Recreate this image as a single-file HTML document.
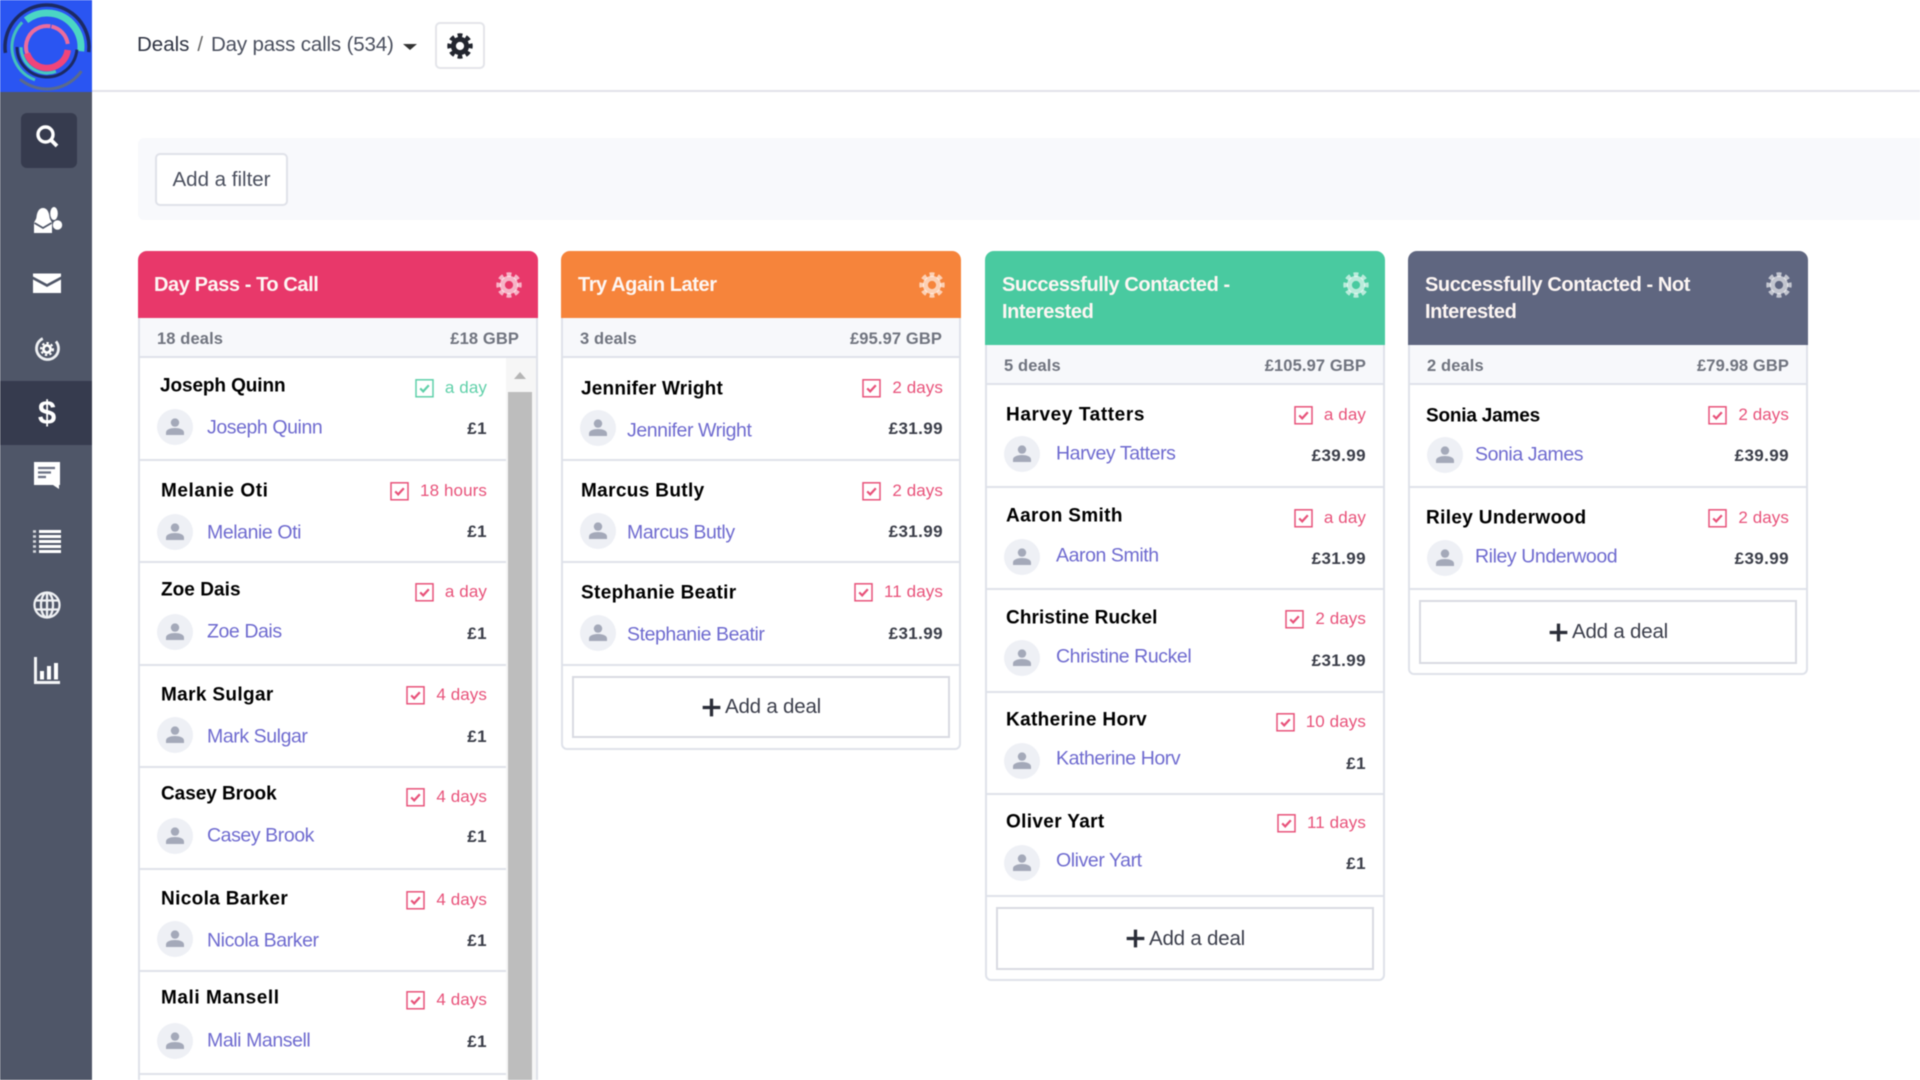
<!DOCTYPE html>
<html lang="en"><head><meta charset="utf-8"><title>Deals</title>
<style>
*{box-sizing:border-box}
html,body{margin:0;padding:0;width:1920px;height:1080px;overflow:hidden;background:#fff;font-family:"Liberation Sans",sans-serif}
#w{position:absolute;left:0;top:0;width:1920px;height:1080px;overflow:hidden;filter:blur(.45px)}
.abs{position:absolute}
#side{position:absolute;left:0;top:0;width:92px;height:1080px;background:#4f5668}
#logo{position:absolute;left:0;top:0;width:92px;height:92px;background:#2a55f2;overflow:hidden}
#sb{position:absolute;left:21px;top:113px;width:56px;height:55px;background:#363b4e;border-radius:6px}
#act{position:absolute;left:0;top:381px;width:92px;height:64px;background:#363b4e}
.si{position:absolute;left:29px;width:36px;height:36px;color:#fff}
#top{position:absolute;left:92px;top:90px;width:1828px;height:2px;background:#e2e2ea}
#crumb{position:absolute;left:137px;top:31px;font-size:20.5px;line-height:27px;color:#4a4f5e;white-space:nowrap;letter-spacing:-.15px}
#crumb b{font-weight:normal;color:#2e3342;letter-spacing:0}
#crumb i{font-style:normal;color:#666;margin:0 8px}
#caret{position:absolute;left:403px;top:44px;width:0;height:0;border:7px solid transparent;border-top:6px solid #333;border-bottom:0}
#gbtn{position:absolute;left:435px;top:22px;width:50px;height:47px;border:2px solid #e4e5ea;border-radius:5px;background:#fff}
#fbar{position:absolute;left:138px;top:138px;width:1782px;height:82px;background:#f8f9fc;border-radius:6px 0 0 6px}
#fbtn{position:absolute;left:155px;top:153px;width:133px;height:53px;background:#fff;border:2px solid #e0e2e9;border-radius:5px;font-size:20.5px;line-height:49px;text-align:center;color:#4a4f5e}
.col{position:absolute;top:0;width:400px;height:1080px}
.hd{position:absolute;left:0;top:251px;width:400px;border-radius:9px 9px 0 0;font-weight:bold;font-size:20px;line-height:27px;padding:21px 100px 0 16px;letter-spacing:-.42px;color:#fdf6f3}
.gear{position:absolute;left:357px;top:271px;width:28px;height:28px;color:rgba(255,255,255,.62)}
.st{position:absolute;left:0;width:400px;height:40px;background:#f7f8fb;border-left:2px solid #dfe2ea;border-right:2px solid #dfe2ea;border-bottom:2px solid #dfe2ea;font-size:16.5px;font-weight:bold;color:#70747f;line-height:43px;padding:0 17px 0 17px;display:flex;justify-content:space-between;letter-spacing:.12px}
.side{position:absolute;left:0;width:400px;border-left:2px solid #dfe2ea;border-right:2px solid #dfe2ea}
.dv{position:absolute;left:0;width:400px;height:2px;background:#dfe2ea}
.i{position:absolute;transform:translateY(-50%);white-space:nowrap;line-height:1.2}
.n{left:var(--nx);font-size:19px;font-weight:bold;color:#000;letter-spacing:.35px;margin-top:2px}
.c{left:var(--cx);font-size:19.5px;color:#5a56c9;letter-spacing:-.42px;opacity:.88;margin-top:1px}
.d{right:var(--r);font-size:17px;color:#e8527a;display:flex;align-items:center;font-weight:normal;letter-spacing:.1px;margin-top:1px}
.d.g{color:#5fd0a9}
.d svg{width:19px;height:19px;margin-right:11px;flex:none}
.a{right:var(--r);font-size:17px;font-weight:bold;color:#3b3e49;letter-spacing:.4px;margin-top:2px}
.av{position:absolute;left:calc(var(--ax) - 18px);width:36px;height:36px;margin-top:-18px}
.add{position:absolute;left:0;width:400px;border:2px solid #dfe2ea;border-radius:0 0 6px 6px;background:#fff}
.btn{position:absolute;left:11px;width:378px;border:2px solid #d9dbe2;background:#fff;font-size:20.5px;color:#3c3f4c;display:flex;align-items:center;justify-content:center;letter-spacing:-.2px}
.btn svg{width:21px;height:21px;margin-right:3px}
</style></head><body>
<svg width="0" height="0" style="position:absolute">
<defs>
<symbol id="gr" viewBox="0 0 28 28">
<circle cx="14" cy="14" r="6.6" fill="none" stroke="currentColor" stroke-width="5"/>
<circle cx="14" cy="14" r="10.4" fill="none" stroke="currentColor" stroke-width="4.600" pathLength="64" stroke-dasharray="4.600 3.400" stroke-dashoffset="2.300"/>
</symbol>
<symbol id="cb" viewBox="0 0 19 19">
<rect x="1" y="1" width="17" height="17" fill="none" stroke="currentColor" stroke-width="1.5"/>
<path d="M5.2 9.6l3 3 5.6-6.2" fill="none" stroke="currentColor" stroke-width="2.2"/>
</symbol>
<symbol id="av" viewBox="0 0 36 36">
<circle cx="18" cy="18" r="18" fill="#eef0f5"/>
<circle cx="18" cy="13.6" r="4.2" fill="#a4a9b9"/>
<path d="M9 26v-2.5c0-3 4.5-4.5 9-4.5s9 1.500 9 4.500V26z" fill="#a4a9b9"/>
</symbol>
<symbol id="pl" viewBox="0 0 19 19"><path d="M8 1.500h3v6.500h6.500v3H11v6.500H8V11H1.500V8H8z" fill="#2a2d38"/></symbol>
</defs></svg>
<div id="w">
<div id="side">
<div id="logo"><svg width="92" height="92" viewBox="0 0 92 92" fill="none">
<g stroke-linecap="butt" transform="translate(2 4)">
<circle cx="45" cy="43" r="42" stroke="#1c2a63" stroke-width="3.500" pathLength="360" stroke-dasharray="195 360" transform="rotate(172 45 43)"/>
<circle cx="45" cy="43" r="42" stroke="#5a6a8c" stroke-width="3" pathLength="360" stroke-dasharray="95 360" transform="rotate(35 45 43)"/>
<circle cx="45" cy="43" r="34" stroke="#4bd6c4" stroke-width="7" pathLength="360" stroke-dasharray="135 360" transform="rotate(232 45 43)"/>
<circle cx="45" cy="43" r="35" stroke="#44c1bb" stroke-width="3" pathLength="360" stroke-dasharray="115 360" transform="rotate(110 45 43)"/>
<circle cx="45" cy="43" r="30" stroke="#1c2a63" stroke-width="3" pathLength="360" stroke-dasharray="175 360" transform="rotate(5 45 43)"/>
<circle cx="45" cy="43" r="26" stroke="#45c9c0" stroke-width="3" pathLength="360" stroke-dasharray="110 360" transform="rotate(70 45 43)"/>
<circle cx="45" cy="43" r="21" stroke="#ec6c9c" stroke-width="4" pathLength="360" stroke-dasharray="120 360" transform="rotate(160 45 43)"/>
<circle cx="45" cy="43" r="21" stroke="#ec6c9c" stroke-width="4" pathLength="360" stroke-dasharray="70 360" transform="rotate(282 45 43)"/>
<circle cx="45" cy="43" r="21" stroke="#f0457a" stroke-width="6.500" pathLength="360" stroke-dasharray="155 360" transform="rotate(8 45 43)"/>
</g></svg></div>
<div id="sb"></div><div id="act"></div>
<svg class="si" style="top:119px" viewBox="0 0 36 36" fill="none"><circle cx="16.500" cy="15.500" r="7.500" stroke="#fff" stroke-width="3.400"/><path d="M21.500 20.500l6.500 6.500" stroke="#fff" stroke-width="3.800"/></svg>
<svg class="si" style="top:201px" viewBox="0 0 36 36"><ellipse cx="25" cy="12.500" rx="3.800" ry="6.500" fill="#fff"/><circle cx="28.500" cy="24" r="4.700" fill="#fff"/><path d="M14 7c4 0 6 4 6.500 9 .3 3 2.500 4 2.500 7V32H5v-9c0-3 2.200-4 2.500-7 .5-5 2.500-9 6.500-9z" fill="#fff"/><path d="M5.500 22l8.500 5 8.500-5" fill="none" stroke="#4f5668" stroke-width="1.800"/></svg>
<svg class="si" style="top:265px" viewBox="0 0 36 36"><path d="M4 8.500h28v3L18 19 4 11.500z" fill="#fff"/><path d="M4 14.500L18 22l14-7.500V28H4z" fill="#fff"/></svg>
<svg class="si" style="top:330px" viewBox="0 0 36 36" fill="none"><circle cx="18.500" cy="18.500" r="11" stroke="#eef0f3" stroke-width="2.800" pathLength="360" stroke-dasharray="285 360" transform="rotate(-40 18.500 18.500)"/><circle cx="18" cy="19" r="3.600" stroke="#fff" stroke-width="2.800"/><circle cx="18" cy="19" r="6" stroke="#fff" stroke-width="2" pathLength="48" stroke-dasharray="3 3"/></svg>
<div class="abs" style="left:34px;top:396px;width:26px;text-align:center;font-size:33px;line-height:33px;font-weight:bold;color:#fff">$</div>
<svg class="si" style="top:457px" viewBox="0 0 36 36"><path d="M5 5h26v23h-1v4l-6-4H5z" fill="#fff"/><path d="M9 11h17M9 15.500h13M9 20h8" stroke="#6b7183" stroke-width="2.200"/></svg>
<svg class="si" style="top:523px" viewBox="0 0 36 36"><path d="M10 8.500h22M10 13.500h22M10 18.500h22M10 23.500h22M10 28.500h22" stroke="#fff" stroke-width="3"/><path d="M4 8.500h3M4 13.500h3M4 18.500h3M4 23.500h3M4 28.500h3" stroke="#d5d7dd" stroke-width="2.400"/></svg>
<svg class="si" style="top:587px" viewBox="0 0 36 36" fill="none" stroke="#eef0f3" stroke-width="2.300"><circle cx="18" cy="18" r="12.500"/><ellipse cx="18" cy="18" rx="6" ry="12.500"/><path d="M18 5.500v25M6.500 13.500h23M6.500 22.500h23"/></svg>
<svg class="si" style="top:653px" viewBox="0 0 36 36"><path d="M5 4h3v24h23v3H5z" fill="#f3f4f6"/><path d="M11 18h4v8.500h-4zM18 13h4v13.500h-4zM25 10h4v16.500h-4z" fill="#fff"/></svg>
</div>
<div id="top"></div>
<div id="crumb"><b>Deals</b><i>/</i>Day pass calls (534)</div>
<div id="caret"></div>
<div id="gbtn"><svg style="position:absolute;left:9px;top:8px;color:#23262f" width="28" height="28"><use href="#gr"/></svg></div>
<div id="fbar"></div>
<div id="fbtn">Add a filter</div>

<!-- Column 1 -->
<div class="col" style="left:138px;--nx:23px;--ax:37px;--cx:69px;--r:51px">
<div class="hd" style="height:68px;background:#e8386a">Day Pass - To Call</div>
<svg class="gear"><use href="#gr"/></svg>
<div class="st" style="top:318px">
<span>18 deals</span><span>£18 GBP</span></div>
<div class="side" style="top:358px;height:722px"></div>
<div class="abs" style="left:368px;top:358px;width:30px;height:722px;background:#f6f6f6"></div>
<div class="abs" style="left:370px;top:392px;width:24px;height:688px;background:#bdbdbd"></div>
<div class="abs" style="left:376px;top:372px;width:0;height:0;border:6px solid transparent;border-bottom:7px solid #b5b5b5;border-top:0"></div>
<div class="dv" style="top:459px;width:368px"></div><div class="dv" style="top:561px;width:368px"></div><div class="dv" style="top:664px;width:368px"></div><div class="dv" style="top:766px;width:368px"></div><div class="dv" style="top:868px;width:368px"></div><div class="dv" style="top:970px;width:368px"></div><div class="dv" style="top:1073px;width:368px"></div>

<div class="i n" style="top:385px;left:22px;letter-spacing:-.1px">Joseph Quinn</div><div class="i d g" style="top:387px"><svg><use href="#cb"/></svg>a day</div><svg class="av" style="top:427px"><use href="#av"/></svg><div class="i c" style="top:427px">Joseph Quinn</div><div class="i a" style="top:427px">£1</div>
<div class="i n" style="top:490px;letter-spacing:.55px">Melanie Oti</div><div class="i d" style="top:490px"><svg><use href="#cb"/></svg>18 hours</div><svg class="av" style="top:532px"><use href="#av"/></svg><div class="i c" style="top:532px">Melanie Oti</div><div class="i a" style="top:530px">£1</div>
<div class="i n" style="top:589px;letter-spacing:.05px">Zoe Dais</div><div class="i d" style="top:591px"><svg><use href="#cb"/></svg>a day</div><svg class="av" style="top:632px"><use href="#av"/></svg><div class="i c" style="top:631px">Zoe Dais</div><div class="i a" style="top:632px">£1</div>
<div class="i n" style="top:694px">Mark Sulgar</div><div class="i d" style="top:694px"><svg><use href="#cb"/></svg>4 days</div><svg class="av" style="top:735px"><use href="#av"/></svg><div class="i c" style="top:736px">Mark Sulgar</div><div class="i a" style="top:735px">£1</div>
<div class="i n" style="top:793px;letter-spacing:-.05px">Casey Brook</div><div class="i d" style="top:796px"><svg><use href="#cb"/></svg>4 days</div><svg class="av" style="top:836px"><use href="#av"/></svg><div class="i c" style="top:835px">Casey Brook</div><div class="i a" style="top:835px">£1</div>
<div class="i n" style="top:898px">Nicola Barker</div><div class="i d" style="top:899px"><svg><use href="#cb"/></svg>4 days</div><svg class="av" style="top:939px"><use href="#av"/></svg><div class="i c" style="top:940px">Nicola Barker</div><div class="i a" style="top:939px">£1</div>
<div class="i n" style="top:997px;letter-spacing:.55px">Mali Mansell</div><div class="i d" style="top:999px"><svg><use href="#cb"/></svg>4 days</div><svg class="av" style="top:1041px"><use href="#av"/></svg><div class="i c" style="top:1040px">Mali Mansell</div><div class="i a" style="top:1040px">£1</div>
</div>

<!-- Column 2 -->
<div class="col" style="left:561px;--nx:20px;--ax:37px;--cx:66px;--r:18px">
<div class="hd" style="height:68px;background:#f6843b;padding-left:17px">Try Again Later</div>
<svg class="gear"><use href="#gr"/></svg>
<div class="st" style="top:318px"><span>3 deals</span><span>£95.97 GBP</span></div>
<div class="side" style="top:358px;height:308px"></div>
<div class="dv" style="top:459px"></div><div class="dv" style="top:561px"></div>
<div class="i n" style="top:388px;letter-spacing:.2px">Jennifer Wright</div><div class="i d" style="top:387px"><svg><use href="#cb"/></svg>2 days</div><svg class="av" style="top:428px"><use href="#av"/></svg><div class="i c" style="top:430px">Jennifer Wright</div><div class="i a" style="top:427px">£31.99</div>
<div class="i n" style="top:490px">Marcus Butly</div><div class="i d" style="top:490px"><svg><use href="#cb"/></svg>2 days</div><svg class="av" style="top:531px"><use href="#av"/></svg><div class="i c" style="top:532px">Marcus Butly</div><div class="i a" style="top:530px">£31.99</div>
<div class="i n" style="top:592px">Stephanie Beatir</div><div class="i d" style="top:591px"><svg><use href="#cb"/></svg>11 days</div><svg class="av" style="top:633px"><use href="#av"/></svg><div class="i c" style="top:634px">Stephanie Beatir</div><div class="i a" style="top:632px">£31.99</div>
<div class="add" style="top:664px;height:86px"></div>
<div class="btn" style="top:676px;height:62px"><svg><use href="#pl"/></svg>Add a deal</div>
</div>

<!-- Column 3 -->
<div class="col" style="left:985px;--nx:21px;--ax:37px;--cx:71px;--r:19px">
<div class="hd" style="height:94px;background:#49caa0;padding-left:17px">Successfully Contacted - Interested</div>
<svg class="gear"><use href="#gr"/></svg>
<div class="st" style="top:345px"><span>5 deals</span><span>£105.97 GBP</span></div>
<div class="side" style="top:385px;height:511px"></div>
<div class="dv" style="top:486px"></div><div class="dv" style="top:588px"></div><div class="dv" style="top:691px"></div><div class="dv" style="top:793px"></div>
<div class="i n" style="top:414px;letter-spacing:.6px">Harvey Tatters</div><div class="i d" style="top:414px"><svg><use href="#cb"/></svg>a day</div><svg class="av" style="top:454px"><use href="#av"/></svg><div class="i c" style="top:453px">Harvey Tatters</div><div class="i a" style="top:454px">£39.99</div>
<div class="i n" style="top:515px">Aaron Smith</div><div class="i d" style="top:517px"><svg><use href="#cb"/></svg>a day</div><svg class="av" style="top:557px"><use href="#av"/></svg><div class="i c" style="top:555px">Aaron Smith</div><div class="i a" style="top:557px">£31.99</div>
<div class="i n" style="top:617px;letter-spacing:.1px">Christine Ruckel</div><div class="i d" style="top:618px"><svg><use href="#cb"/></svg>2 days</div><svg class="av" style="top:658px"><use href="#av"/></svg><div class="i c" style="top:656px">Christine Ruckel</div><div class="i a" style="top:659px">£31.99</div>
<div class="i n" style="top:719px">Katherine Horv</div><div class="i d" style="top:721px"><svg><use href="#cb"/></svg>10 days</div><svg class="av" style="top:761px"><use href="#av"/></svg><div class="i c" style="top:758px">Katherine Horv</div><div class="i a" style="top:762px">£1</div>
<div class="i n" style="top:821px">Oliver Yart</div><div class="i d" style="top:822px"><svg><use href="#cb"/></svg>11 days</div><svg class="av" style="top:863px"><use href="#av"/></svg><div class="i c" style="top:860px">Oliver Yart</div><div class="i a" style="top:862px">£1</div>
<div class="add" style="top:895px;height:86px"></div>
<div class="btn" style="top:907px;height:63px"><svg><use href="#pl"/></svg>Add a deal</div>
</div>

<!-- Column 4 -->
<div class="col" style="left:1408px;--nx:18px;--ax:37px;--cx:67px;--r:19px">
<div class="hd" style="height:94px;background:#5f6680;padding-left:17px">Successfully Contacted - Not Interested</div>
<svg class="gear"><use href="#gr"/></svg>
<div class="st" style="top:345px"><span>2 deals</span><span>£79.98 GBP</span></div>
<div class="side" style="top:385px;height:205px"></div>
<div class="dv" style="top:486px"></div>
<div class="i n" style="top:415px;letter-spacing:-.2px">Sonia James</div><div class="i d" style="top:414px"><svg><use href="#cb"/></svg>2 days</div><svg class="av" style="top:455px"><use href="#av"/></svg><div class="i c" style="top:454px">Sonia James</div><div class="i a" style="top:454px">£39.99</div>
<div class="i n" style="top:517px">Riley Underwood</div><div class="i d" style="top:517px"><svg><use href="#cb"/></svg>2 days</div><svg class="av" style="top:558px"><use href="#av"/></svg><div class="i c" style="top:556px">Riley Underwood</div><div class="i a" style="top:557px">£39.99</div>
<div class="add" style="top:588px;height:87px"></div>
<div class="btn" style="top:600px;height:64px"><svg><use href="#pl"/></svg>Add a deal</div>
</div>
</div>
</body></html>
